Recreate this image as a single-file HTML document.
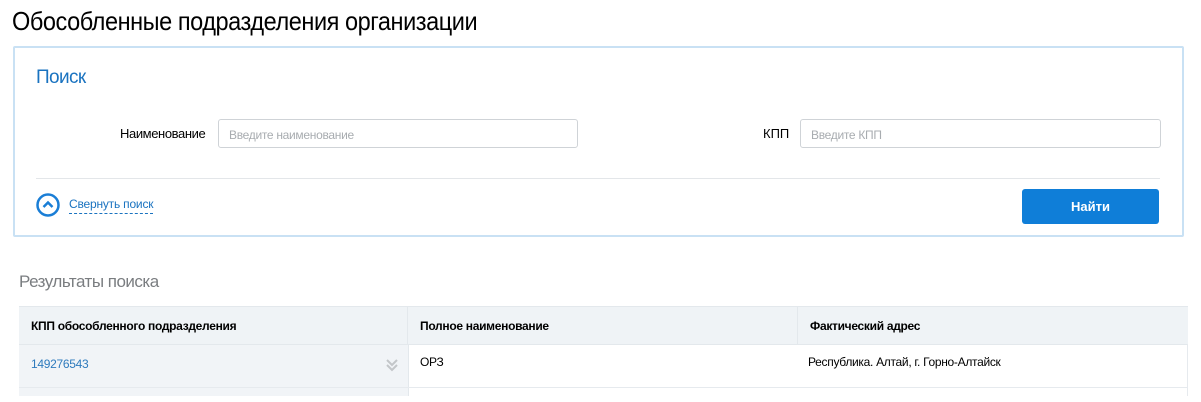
<!DOCTYPE html>
<html><head><meta charset="utf-8"><style>
body{margin:0;width:1201px;height:402px;background:#fff;font-family:"Liberation Sans",Arial,sans-serif;overflow:hidden;position:relative;color:#000}
.a{position:absolute;white-space:nowrap}
.t{left:12px;top:6px;font-size:26px;letter-spacing:-0.5px;transform:scaleX(0.905);transform-origin:left}
.panel{position:absolute;left:13px;top:46px;width:1167px;height:187px;border:2px solid #c9e1f4;border-radius:2px}
.inp{position:absolute;height:29px;border:1px solid #cfd3d7;border-radius:3px;box-sizing:border-box;font-size:12px;color:#a8acb0;padding:8px 10px;letter-spacing:-0.3px}
.btn{left:1022px;top:189px;width:137px;height:35px;background:#0f7ed8;border-radius:3px;color:#fff;font-size:13px;font-weight:bold;text-align:center;line-height:35px}
.tbl{position:absolute;left:19px;top:306px;width:1169px}
.hd{position:absolute;top:0;height:38px;background:#eff3f6;font-size:12px;font-weight:bold;line-height:38px;padding-left:12px;box-sizing:border-box;border-top:1px solid #e3e8ec;letter-spacing:-0.3px}
.c{position:absolute;font-size:12px;letter-spacing:-0.3px}
</style></head><body>
<div class="a t">Обособленные подразделения организации</div>
<div class="panel"></div>
<div class="a" style="left:36px;top:67px;font-size:19px;color:#1a73c0;letter-spacing:-0.6px">Поиск</div>
<div class="a" style="left:120px;top:126px;font-size:13px;letter-spacing:-0.4px">Наименование</div>
<div class="inp" style="left:218px;top:119px;width:360px">Введите наименование</div>
<div class="a" style="left:763px;top:126px;font-size:13px">КПП</div>
<div class="inp" style="left:800px;top:119px;width:361px">Введите КПП</div>
<div class="a" style="left:36px;top:178px;width:1124px;height:1px;background:#e3e6e9"></div>
<svg class="a" style="left:36px;top:193px" width="24" height="24" viewBox="0 0 24 24"><circle cx="12" cy="12" r="10.5" fill="none" stroke="#1a7ed6" stroke-width="2.5"/><path d="M7.5 14l4.5-4.5 4.5 4.5" fill="none" stroke="#1a7ed6" stroke-width="2.5"/></svg>
<div class="a" style="left:69px;top:197px;font-size:12px;color:#1a73c0;border-bottom:1px dashed #1a73c0;padding-bottom:2px;letter-spacing:-0.2px">Свернуть поиск</div>
<div class="a btn">Найти</div>
<div class="a" style="left:19px;top:272px;font-size:17px;color:#7a7d80;letter-spacing:-0.5px">Результаты поиска</div>
<div class="tbl">
<div class="hd" style="left:0;width:389px;border-right:1px solid #e3e8ec">КПП обособленного подразделения</div>
<div class="hd" style="left:389px;width:390px;border-right:1px solid #e3e8ec">Полное наименование</div>
<div class="hd" style="left:779px;width:390px">Фактический адрес</div>
<div style="position:absolute;left:0;top:38px;width:389px;height:52px;background:#f1f4f7;border-right:1px solid #e3e8ec"></div>
<div style="position:absolute;left:0;top:38px;width:1169px;height:1px;background:#e3e8ec"></div>
<div style="position:absolute;left:0;top:81px;width:1169px;height:1px;background:#e6eaee"></div>
<div style="position:absolute;left:1168px;top:38px;width:1px;height:52px;background:#e6eaee"></div>
<div class="c" style="left:12px;top:51px;color:#2f7bbd">149276543</div>
<svg style="position:absolute;left:366px;top:52px" width="14" height="14" viewBox="0 0 14 14"><path d="M2 2l5 5 5-5M2 7l5 5 5-5" fill="none" stroke="#c3c6c9" stroke-width="2"/></svg>
<div class="c" style="left:401px;top:49px">ОРЗ</div>
<div class="c" style="left:789px;top:49px">Республика. Алтай, г. Горно-Алтайск</div>
</div>
</body></html>
